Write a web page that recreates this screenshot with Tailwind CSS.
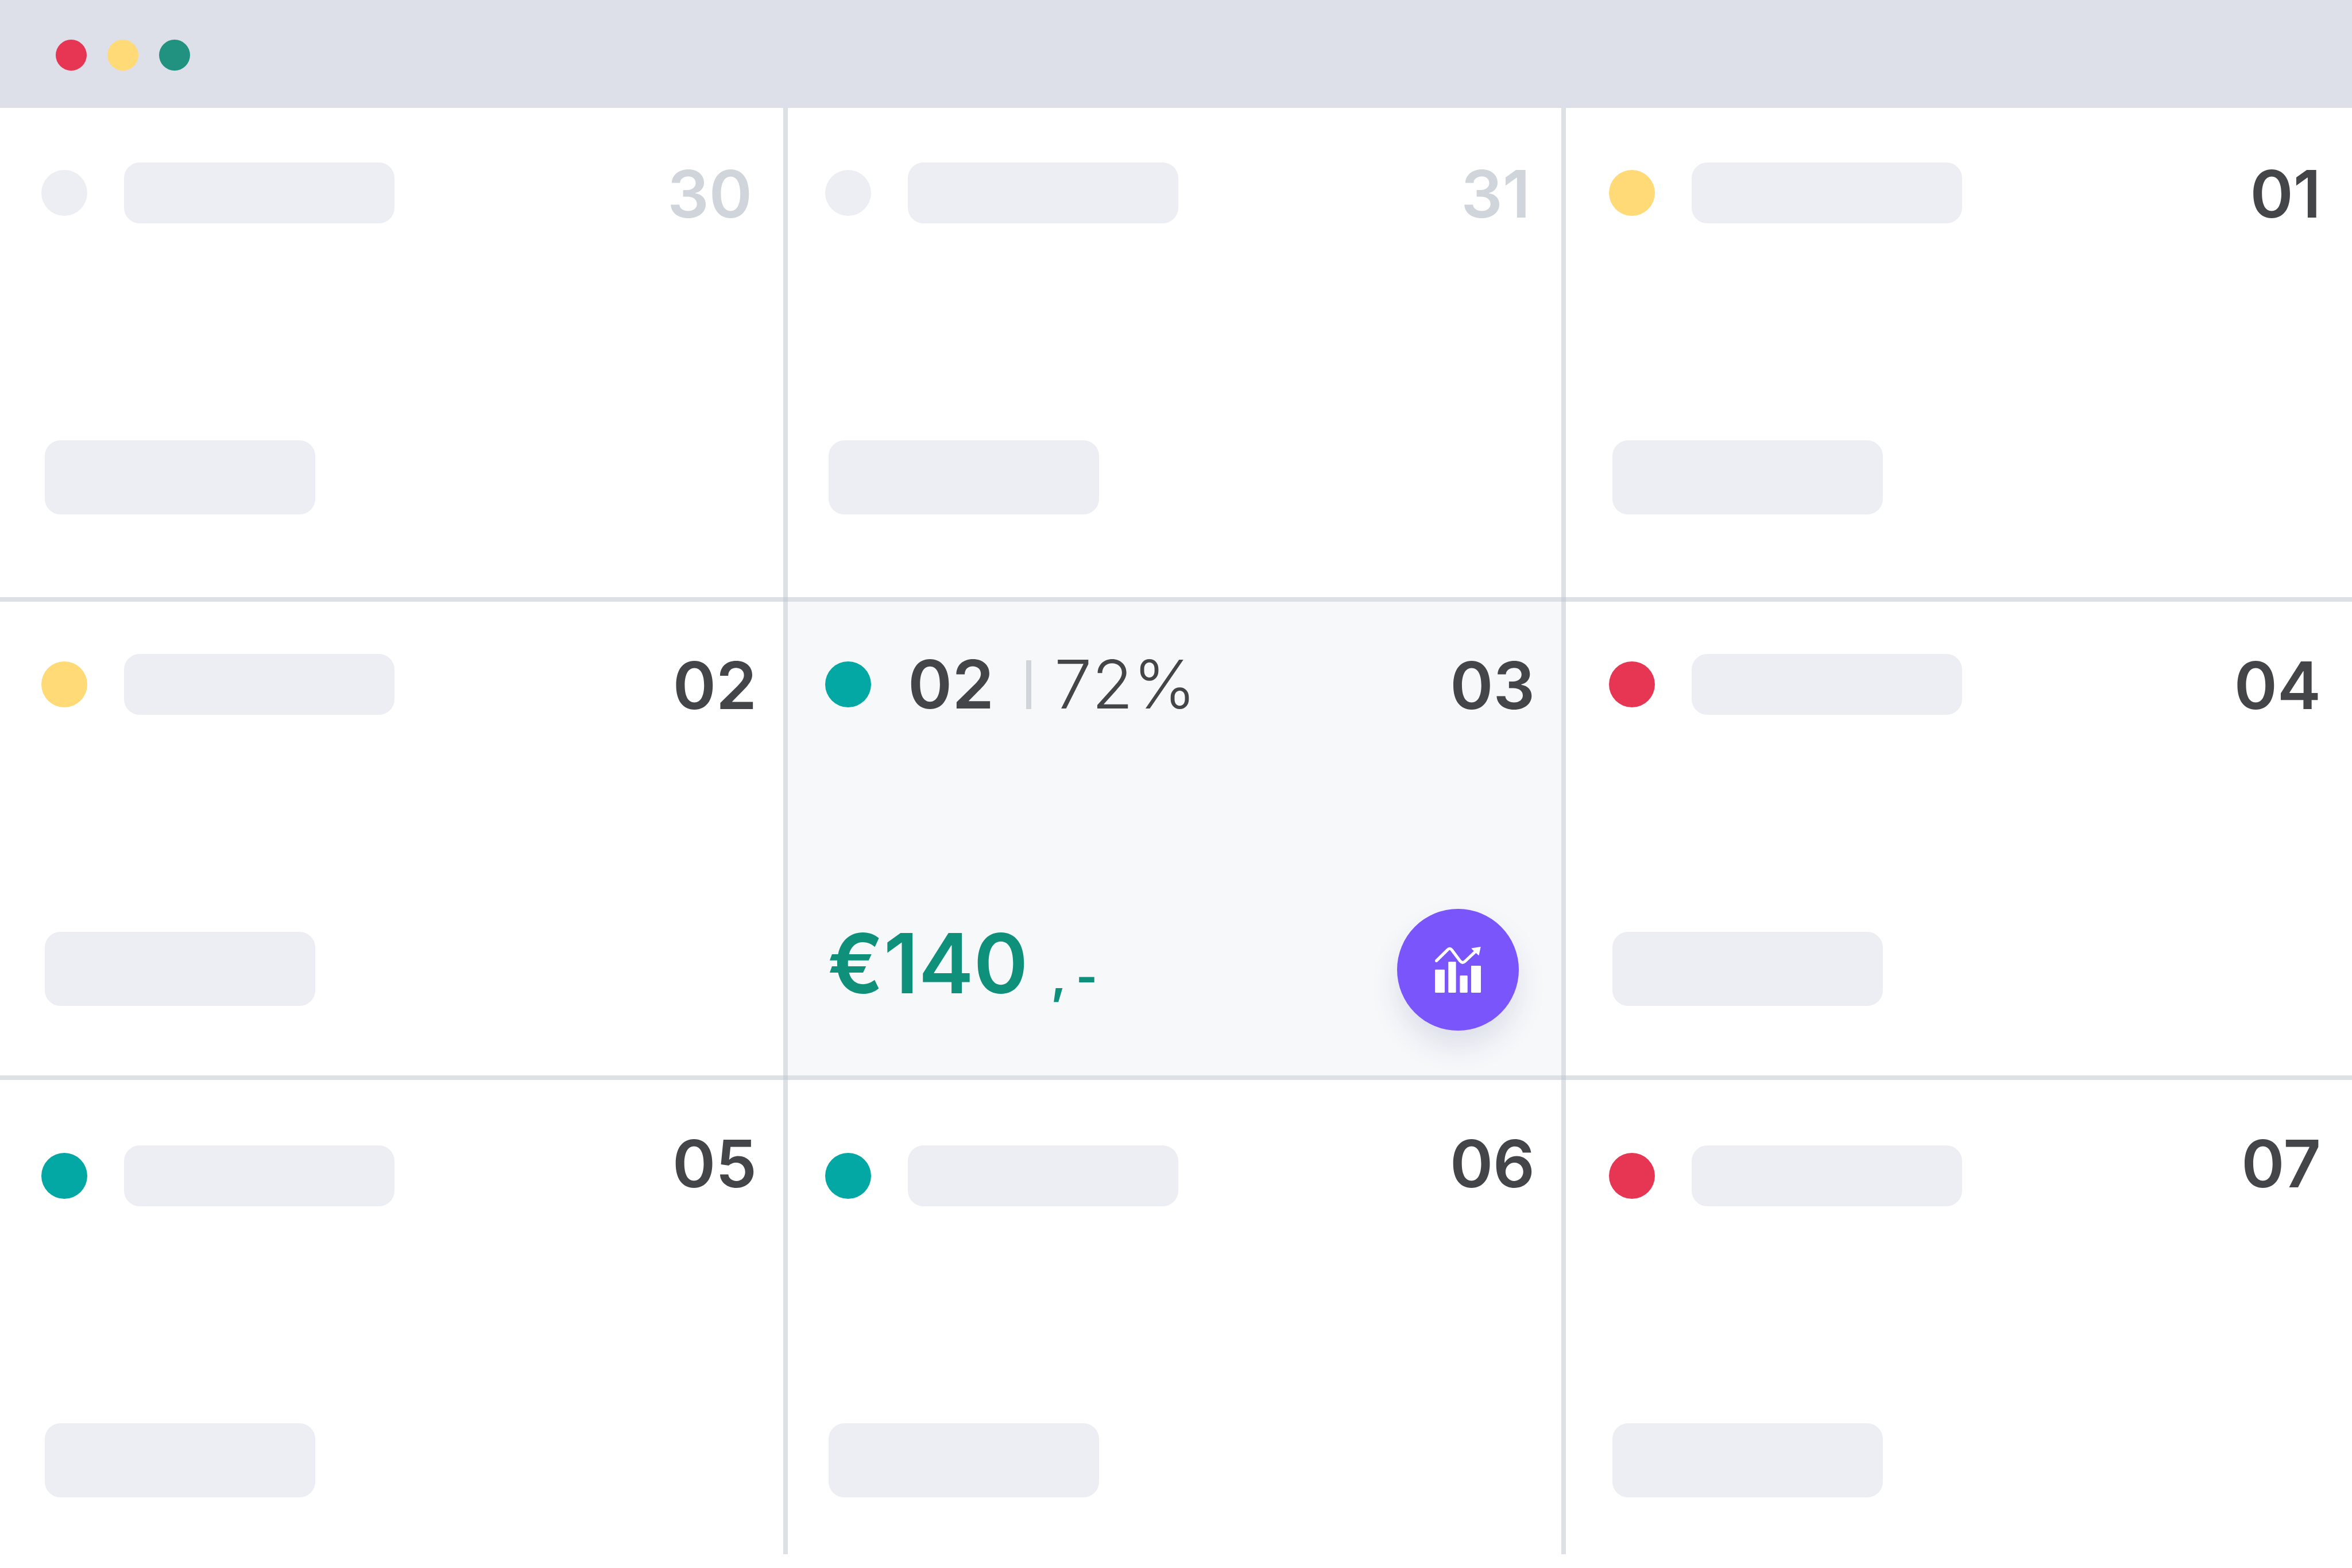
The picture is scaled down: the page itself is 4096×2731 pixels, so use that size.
<!DOCTYPE html>
<html lang="en">
<head>
    <meta charset="utf-8">
    <title>Calendar</title>
    <script src="https://cdn.jsdelivr.net/npm/@tailwindcss/browser@4"></script>
    <style>
        body {
            font-family: Inter, "Liberation Sans", sans-serif;
        }
    </style>
</head>
<body class="flex min-h-screen flex-col bg-white text-[#434549]">
    <header class="flex h-[188px] items-center gap-9 bg-[#dde0e9] px-[97px] pt-1">
        <span class="size-[54px] rounded-full bg-[#e73554]"></span>
        <span class="size-[54px] rounded-full bg-[#ffda76]"></span>
        <span class="size-[54px] rounded-full bg-[#219180]"></span>
    </header>

    <main class="mb-6 grid flex-1 grid-cols-[1372fr_1355fr_1369fr] grid-rows-[860fr_833fr_826fr]">
        <!-- week 1 -->
        <section class="relative border-r-8 border-b-8 border-[#dde0e5] pt-[95px] pr-[54px] pl-[72px]">
            <div class="flex h-[106px] items-start justify-between">
                <div class="flex items-center gap-16">
                    <span class="size-20 rounded-full bg-[#edeef4]"></span>
                    <span class="h-[106px] w-[471px] rounded-[27px] bg-[#edeef4]"></span>
                </div>
                <span class="text-[114px] leading-[110px] font-semibold text-[#d0d5db]">30</span>
            </div>
            <div class="mt-[378px] ml-1.5 h-[129px] w-[471px] rounded-[27px] bg-[#edeef4]"></div>
            <span class="absolute -right-2 -bottom-2 size-2 bg-[#cdd3da]"></span>
        </section>
        <section class="relative border-r-8 border-b-8 border-[#dde0e5] pt-[95px] pr-[54px] pl-[65px]">
            <div class="flex h-[106px] items-start justify-between">
                <div class="flex items-center gap-16">
                    <span class="size-20 rounded-full bg-[#edeef4]"></span>
                    <span class="h-[106px] w-[471px] rounded-[27px] bg-[#edeef4]"></span>
                </div>
                <span class="text-[114px] leading-[110px] font-semibold text-[#d0d5db]">31</span>
            </div>
            <div class="mt-[378px] ml-1.5 h-[129px] w-[471px] rounded-[27px] bg-[#edeef4]"></div>
            <span class="absolute -right-2 -bottom-2 size-2 bg-[#cdd3da]"></span>
        </section>
        <section class="border-b-8 border-[#dde0e5] pt-[95px] pr-[54px] pl-[75px]">
            <div class="flex h-[106px] items-start justify-between">
                <div class="flex items-center gap-16">
                    <span class="size-20 rounded-full bg-[#ffda76]"></span>
                    <span class="h-[106px] w-[471px] rounded-[27px] bg-[#edeef4]"></span>
                </div>
                <span class="text-[114px] leading-[110px] font-semibold">01</span>
            </div>
            <div class="mt-[378px] ml-1.5 h-[129px] w-[471px] rounded-[27px] bg-[#edeef4]"></div>
        </section>

        <!-- week 2 -->
        <section class="relative border-r-8 border-b-8 border-[#dde0e5] pt-[91px] pr-[46px] pl-[72px]">
            <div class="flex h-[106px] items-start justify-between">
                <div class="flex items-center gap-16">
                    <span class="size-20 rounded-full bg-[#ffda76]"></span>
                    <span class="h-[106px] w-[471px] rounded-[27px] bg-[#edeef4]"></span>
                </div>
                <span class="text-[114px] leading-[110px] font-semibold">02</span>
            </div>
            <div class="mt-[378px] ml-1.5 h-[129px] w-[471px] rounded-[27px] bg-[#edeef4]"></div>
            <span class="absolute -right-2 -bottom-2 size-2 bg-[#cdd3da]"></span>
        </section>
        <section class="relative border-r-8 border-b-8 border-[#dde0e5] bg-[#f7f8fa] pt-[91px] pr-[46px] pl-[65px]">
            <div class="flex h-[106px] items-start justify-between">
                <div class="flex h-[106px] items-center">
                    <span class="size-20 rounded-full bg-[#03a7a4]"></span>
                    <span class="ml-16 text-[117px] leading-[110px] font-semibold">02</span>
                    <span class="ml-14 h-[85px] w-[9px] bg-[#d0d5db]"></span>
                    <span class="ml-10 text-[117px] leading-[110px] font-light">72%</span>
                </div>
                <span class="text-[114px] leading-[110px] font-semibold">03</span>
            </div>
            <div class="mt-[338px] flex items-center justify-between pr-7">
                <p class="flex items-baseline gap-10 pl-1 leading-[140px] text-[#0e907b]">
                    <span class="text-[144px] font-semibold">€140</span>
                    <span class="text-[80px] font-bold">, -</span>
                </p>
                <button type="button" aria-label="Show statistics" class="flex size-[212px] items-center justify-center rounded-full bg-[#7955fb] shadow-[0_28px_50px_rgba(38,50,120,0.12)]">
                    <svg class="size-20 text-white" viewBox="0 0 282 282" fill="currentColor" aria-hidden="true">
                        <rect x="0" y="140" width="60" height="142" rx="4"/>
                        <rect x="82" y="92" width="47" height="190" rx="4"/>
                        <rect x="153" y="176" width="47" height="106" rx="4"/>
                        <rect x="222" y="116" width="60" height="166" rx="4"/>
                        <path d="M9 86 77 19Q90 4 103 19L154 87Q169 105 185 89L252 26" fill="none" stroke="currentColor" stroke-width="18" stroke-linecap="round"/>
                        <path d="M281 0 224 9Q226 15 230 18L262 48Q266 53 270 52Z"/>
                    </svg>
                </button>
            </div>
            <span class="absolute -right-2 -bottom-2 size-2 bg-[#cdd3da]"></span>
        </section>
        <section class="border-b-8 border-[#dde0e5] pt-[91px] pr-[54px] pl-[75px]">
            <div class="flex h-[106px] items-start justify-between">
                <div class="flex items-center gap-16">
                    <span class="size-20 rounded-full bg-[#e73554]"></span>
                    <span class="h-[106px] w-[471px] rounded-[27px] bg-[#edeef4]"></span>
                </div>
                <span class="text-[114px] leading-[110px] font-semibold">04</span>
            </div>
            <div class="mt-[378px] ml-1.5 h-[129px] w-[471px] rounded-[27px] bg-[#edeef4]"></div>
        </section>

        <!-- week 3 -->
        <section class="border-r-8 border-[#dde0e5] pt-[91px] pr-[46px] pl-[72px]">
            <div class="flex items-start justify-between">
                <div class="flex items-center gap-16 pt-[23px]">
                    <span class="size-20 rounded-full bg-[#03a7a4]"></span>
                    <span class="h-[106px] w-[471px] rounded-[27px] bg-[#edeef4]"></span>
                </div>
                <span class="text-[114px] leading-[110px] font-semibold">05</span>
            </div>
            <div class="mt-[378px] ml-1.5 h-[129px] w-[471px] rounded-[27px] bg-[#edeef4]"></div>
        </section>
        <section class="border-r-8 border-[#dde0e5] pt-[91px] pr-[46px] pl-[65px]">
            <div class="flex items-start justify-between">
                <div class="flex items-center gap-16 pt-[23px]">
                    <span class="size-20 rounded-full bg-[#03a7a4]"></span>
                    <span class="h-[106px] w-[471px] rounded-[27px] bg-[#edeef4]"></span>
                </div>
                <span class="text-[114px] leading-[110px] font-semibold">06</span>
            </div>
            <div class="mt-[378px] ml-1.5 h-[129px] w-[471px] rounded-[27px] bg-[#edeef4]"></div>
        </section>
        <section class="pt-[91px] pr-[54px] pl-[75px]">
            <div class="flex items-start justify-between">
                <div class="flex items-center gap-16 pt-[23px]">
                    <span class="size-20 rounded-full bg-[#e73554]"></span>
                    <span class="h-[106px] w-[471px] rounded-[27px] bg-[#edeef4]"></span>
                </div>
                <span class="text-[114px] leading-[110px] font-semibold">07</span>
            </div>
            <div class="mt-[378px] ml-1.5 h-[129px] w-[471px] rounded-[27px] bg-[#edeef4]"></div>
        </section>
    </main>
</body>
</html>
